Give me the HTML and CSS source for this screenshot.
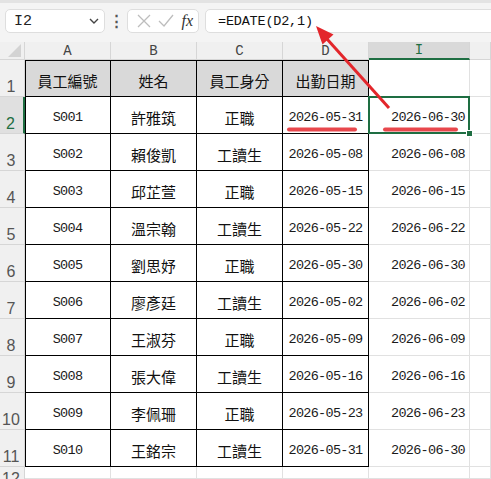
FILE: index.html
```html
<!DOCTYPE html>
<html lang="zh-TW">
<head>
    <meta charset="UTF-8">
    <meta name="viewport" content="width=device-width, initial-scale=1.0">
    <title>EDATE</title>
    <link rel="stylesheet" href="styles.css">
</head>
<body>
    <div class="toolbar">
        <div class="namebox">
            <span class="namebox-text">I2</span>
            <svg class="chevron" width="10" height="6" viewBox="0 0 10 6"><path d="M1 1 L5 5 L9 1" fill="none" stroke="#444" stroke-width="1.4"/></svg>
        </div>
        <div class="dots">⋮</div>
        <div class="fx-box">
            <svg width="14" height="14" viewBox="0 0 14 14"><path d="M1 1 L13 13 M13 1 L1 13" stroke="#bdbdbd" stroke-width="1.3"/></svg>
            <svg width="16" height="14" viewBox="0 0 16 14"><path d="M1 7 L6 12 L15 1" fill="none" stroke="#bdbdbd" stroke-width="1.3"/></svg>
            <span class="fx">fx</span>
        </div>
        <div class="formula">=EDATE(D2,1)</div>
    </div>

    <div class="sheet">
        <div class="corner"></div>
        <div class="col-head">A</div>
        <div class="col-head">B</div>
        <div class="col-head">C</div>
        <div class="col-head">D</div>
        <div class="col-head active">I</div>
        <div class="col-head"></div>

        <div class="row-head">1</div>
        <div class="cell t a top head-fill cjk">員工編號</div>
        <div class="cell t top head-fill cjk">姓名</div>
        <div class="cell t top head-fill cjk">員工身分</div>
        <div class="cell t top head-fill cjk">出勤日期</div>
        <div class="cell"></div>
        <div class="cell"></div>

        <div class="row-head active">2</div>
        <div class="cell t a mono">S001</div>
        <div class="cell t cjk">許雅筑</div>
        <div class="cell t cjk">正職</div>
        <div class="cell t mono">2026-05-31</div>
        <div class="cell mono right selected">2026-06-30</div>
        <div class="cell"></div>

        <div class="row-head">3</div>
        <div class="cell t a mono">S002</div>
        <div class="cell t cjk">賴俊凱</div>
        <div class="cell t cjk">工讀生</div>
        <div class="cell t mono">2026-05-08</div>
        <div class="cell mono right">2026-06-08</div>
        <div class="cell"></div>

        <div class="row-head">4</div>
        <div class="cell t a mono">S003</div>
        <div class="cell t cjk">邱芷萱</div>
        <div class="cell t cjk">正職</div>
        <div class="cell t mono">2026-05-15</div>
        <div class="cell mono right">2026-06-15</div>
        <div class="cell"></div>

        <div class="row-head">5</div>
        <div class="cell t a mono">S004</div>
        <div class="cell t cjk">溫宗翰</div>
        <div class="cell t cjk">工讀生</div>
        <div class="cell t mono">2026-05-22</div>
        <div class="cell mono right">2026-06-22</div>
        <div class="cell"></div>

        <div class="row-head">6</div>
        <div class="cell t a mono">S005</div>
        <div class="cell t cjk">劉思妤</div>
        <div class="cell t cjk">正職</div>
        <div class="cell t mono">2026-05-30</div>
        <div class="cell mono right">2026-06-30</div>
        <div class="cell"></div>

        <div class="row-head">7</div>
        <div class="cell t a mono">S006</div>
        <div class="cell t cjk">廖彥廷</div>
        <div class="cell t cjk">工讀生</div>
        <div class="cell t mono">2026-05-02</div>
        <div class="cell mono right">2026-06-02</div>
        <div class="cell"></div>

        <div class="row-head">8</div>
        <div class="cell t a mono">S007</div>
        <div class="cell t cjk">王淑芬</div>
        <div class="cell t cjk">正職</div>
        <div class="cell t mono">2026-05-09</div>
        <div class="cell mono right">2026-06-09</div>
        <div class="cell"></div>

        <div class="row-head">9</div>
        <div class="cell t a mono">S008</div>
        <div class="cell t cjk">張大偉</div>
        <div class="cell t cjk">工讀生</div>
        <div class="cell t mono">2026-05-16</div>
        <div class="cell mono right">2026-06-16</div>
        <div class="cell"></div>

        <div class="row-head">10</div>
        <div class="cell t a mono">S009</div>
        <div class="cell t cjk">李佩珊</div>
        <div class="cell t cjk">正職</div>
        <div class="cell t mono">2026-05-23</div>
        <div class="cell mono right">2026-06-23</div>
        <div class="cell"></div>

        <div class="row-head">11</div>
        <div class="cell t a mono">S010</div>
        <div class="cell t cjk">王銘宗</div>
        <div class="cell t cjk">工讀生</div>
        <div class="cell t mono">2026-05-31</div>
        <div class="cell mono right">2026-06-30</div>
        <div class="cell"></div>

        <div class="row-head last">12</div>
        <div class="cell"></div>
        <div class="cell"></div>
        <div class="cell"></div>
        <div class="cell"></div>
        <div class="cell"></div>
        <div class="cell"></div>
    </div>

    <!-- 標註：箭頭與底線 -->
    <svg class="marks" width="491" height="479" viewBox="0 0 491 479">
        <line x1="389" y1="108" x2="327" y2="39" stroke="#e3262b" stroke-width="3"/>
        <polygon points="316,26 333.5,34.5 322.5,44.5" fill="#e3262b"/>
        <line x1="289" y1="129.5" x2="355" y2="129.5" stroke="#e8474c" stroke-width="4" stroke-linecap="round"/>
        <line x1="385" y1="129.5" x2="456" y2="129.5" stroke="#e8474c" stroke-width="4" stroke-linecap="round"/>
    </svg>
</body>
</html>
```

FILE: styles.css
```css
body {
    margin: 0;
    width: 491px;
    height: 479px;
    overflow: hidden;
    background: #ffffff;
    font-family: 'Liberation Sans', 'Noto Sans CJK TC', sans-serif;
    color: #000;
    position: relative;
}

.toolbar {
    height: 42px;
    box-sizing: border-box;
    background: #f4f4f4;
    border-top: 3px solid #e3e3e3;
    display: flex;
    align-items: flex-start;
    padding: 6px 0 0 5px;
}

.namebox {
    width: 100px;
    height: 24px;
    box-sizing: border-box;
    background: #fff;
    border: 1px solid #dedede;
    border-radius: 5px;
    display: flex;
    align-items: center;
    justify-content: space-between;
    padding: 0 5px 0 8px;
}

.namebox-text {
    font-family: 'Liberation Mono', monospace;
    font-size: 15px;
    color: #222;
}

.dots {
    width: 22px;
    height: 24px;
    display: flex;
    align-items: center;
    justify-content: center;
    font-size: 15px;
    color: #555;
    font-weight: bold;
}

.fx-box {
    width: 72px;
    height: 24px;
    box-sizing: border-box;
    background: #fff;
    border: 1px solid #dedede;
    border-radius: 5px;
    display: flex;
    align-items: center;
    justify-content: space-between;
    padding: 0 5px 0 9px;
}

.fx {
    font-family: 'Liberation Serif', serif;
    font-style: italic;
    font-size: 16px;
    color: #333;
}

.formula {
    flex: 1;
    height: 24px;
    margin-left: 6px;
    margin-right: -8px;
    box-sizing: border-box;
    background: #fff;
    border: 1px solid #dedede;
    border-radius: 5px;
    display: flex;
    align-items: center;
    padding-left: 12px;
    font-family: 'Liberation Mono', monospace;
    font-size: 13.5px;
    letter-spacing: -0.2px;
    color: #111;
}

.sheet {
    display: grid;
    grid-template-columns: 25px 86px 86px 86px 86px 101px 21px;
    grid-template-rows: 18px repeat(11, 37px) 12px;
}

.corner,
.col-head,
.row-head {
    background: #f0f0f0;
    box-sizing: border-box;
    border-right: 1px solid #d6d6d6;
    border-bottom: 1px solid #d6d6d6;
}

.corner {
    position: relative;
}

.corner::after {
    content: "";
    position: absolute;
    right: 3px;
    bottom: 2px;
    width: 13px;
    height: 13px;
    background: #d3d3d3;
    clip-path: polygon(100% 0, 100% 100%, 0 100%);
}

.col-head {
    display: flex;
    align-items: center;
    justify-content: center;
    font-family: 'Liberation Mono', monospace;
    font-size: 14px;
    color: #444;
}

.col-head.active {
    background: #d9d9d9;
    color: #1e6e42;
    border-bottom: 2px solid #1e6e42;
}

.row-head {
    display: flex;
    align-items: flex-end;
    justify-content: center;
    padding: 0 2px 1px 0;
    font-size: 16px;
    line-height: 16px;
    color: #555;
}

.row-head.last {
    align-items: flex-start;
    padding-top: 4px;
    border-bottom: none;
    overflow: hidden;
}

.row-head.active {
    background: #e0e0e0;
    color: #1e6e42;
    border-right: 2px solid #1e6e42;
}

.cell {
    box-sizing: border-box;
    border-right: 1px solid #e1e1e1;
    border-bottom: 1px solid #e1e1e1;
    display: flex;
    align-items: center;
    justify-content: center;
    padding-top: 4px;
    white-space: nowrap;
}

.cell.t {
    border-right-color: #000;
    border-bottom-color: #000;
}

.cell.a {
    box-shadow: inset 1px 0 0 #000;
}

.cell.top {
    box-shadow: inset 0 1px 0 #000;
}

.cell.a.top {
    box-shadow: inset 1px 1px 0 #000;
}

.head-fill {
    background: #d9d9d9;
}

.cjk {
    font-family: 'Noto Sans CJK TC', sans-serif;
    font-size: 15px;
    color: #111;
}

.mono {
    font-family: 'Liberation Mono', monospace;
    font-size: 13.5px;
    letter-spacing: -0.7px;
    color: #1a1a1a;
}

.right {
    justify-content: flex-end;
    padding-right: 4px;
}

.selected {
    position: relative;
}

.selected::after {
    content: "";
    position: absolute;
    top: -1px;
    left: -1px;
    right: -1px;
    bottom: -1px;
    border: 2px solid #1e6e42;
}

.selected::before {
    content: "";
    position: absolute;
    right: -4px;
    bottom: -4px;
    width: 5px;
    height: 5px;
    background: #1e6e42;
    border: 1px solid #fff;
    z-index: 1;
}

.marks {
    position: absolute;
    top: 0;
    left: 0;
    pointer-events: none;
}
```
